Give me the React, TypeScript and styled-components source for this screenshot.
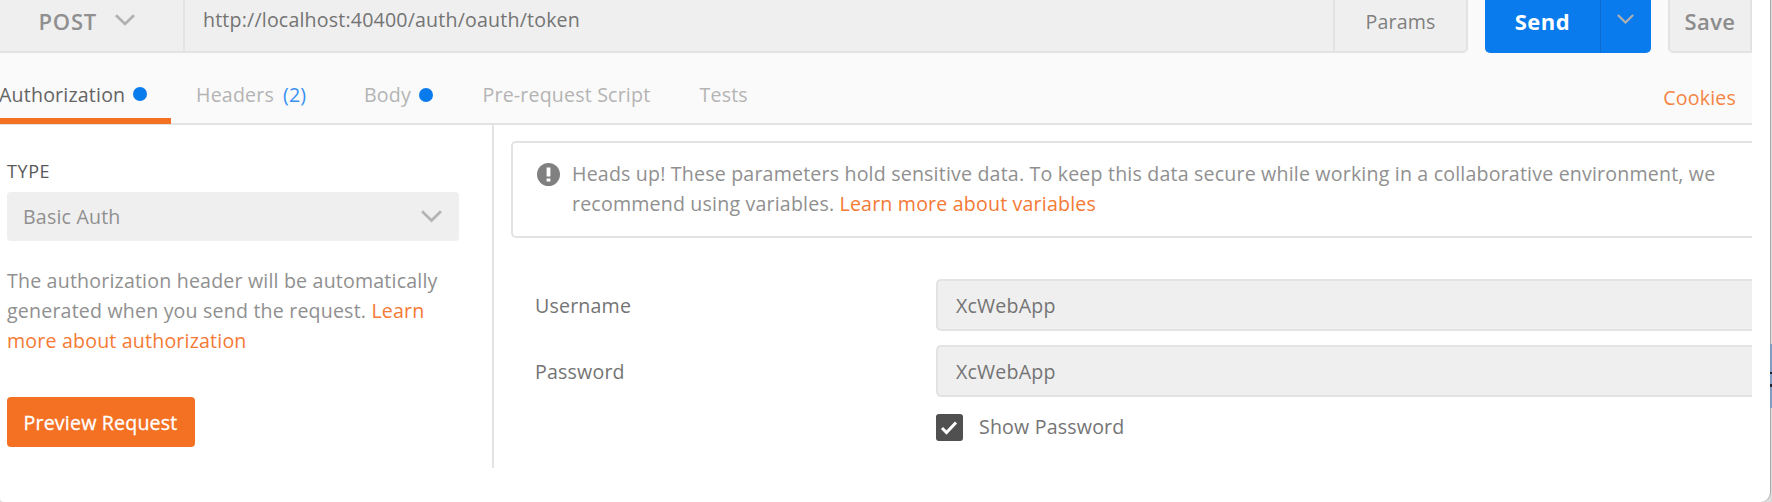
import React from "react";
import styled, { createGlobalStyle, css } from "styled-components";

const GlobalStyle = createGlobalStyle`
  * { box-sizing: border-box; }
  body {
    margin: 0;
    overflow: hidden;
    background: #dcdcdc;
    font-family: "Open Sans", "Noto Sans", sans-serif;
    font-size: 19.6px;
    letter-spacing: 0.18px;
    color: #747474;
  }
  button { font: inherit; letter-spacing: inherit; border: 0; padding: 0; }
`;

const Desktop = styled.div`
  position: relative;
  width: 1772px;
  height: 502px;
  overflow: hidden;
`;

const Window = styled.main`
  width: 1771px;
  height: 502px;
  background: #fff;
  border-right: 1px solid #a9a9a9;
  border-radius: 0 0 10px 4px;
`;

const Content = styled.div`
  width: 1752px;
  overflow: hidden;
`;

const BackgroundStrip = styled.div`
  position: absolute;
  right: 0;
  top: 344px;
  width: 2px;
  height: 64px;
  background: linear-gradient(#7f9cc6 0 28px, #23232f 28px 30px, #7f9cc6 30px 40px, #23232f 40px 43px, #7f9cc6 43px);
`;

const RequestBar = styled.header`
  display: flex;
  height: 64px;
  margin-top: -11px;
  background: #fafafa;
  white-space: nowrap;
`;

const barCell = css`
  display: flex;
  align-items: center;
  background: #efefef;
  border: 2px solid #e3e3e3;
`;

const MethodSelect = styled.div`
  ${barCell}
  width: 185px;
  padding-left: 38.5px;
  gap: 18px;
  border-left: 0;
  font-size: 22px;
  font-weight: 600;
  letter-spacing: 0.8px;
  color: #909090;

  svg { margin-bottom: 3px; }
`;

const UrlField = styled.div`
  ${barCell}
  width: 1148px;
  padding: 0 0 4px 18px;
  border-left: 0;
  border-right: 0;
`;

const ParamsButton = styled.button`
  ${barCell}
  width: 135px;
  justify-content: center;
  border-radius: 0 0 5px 0;
  color: #808080;
`;

const SendGroup = styled.div`
  display: flex;
  width: 166px;
  margin-left: 17px;
  border-radius: 5px;
  background: #097bed;
  color: #fff;
`;

const SendButton = styled.button`
  width: 116px;
  background: none;
  border-right: 1px solid #0a6bd0;
  color: inherit;
  font-size: 22px;
  font-weight: 700;
  letter-spacing: 0.5px;
`;

const SendMenu = styled.button`
  display: flex;
  flex: 1;
  align-items: center;
  justify-content: center;
  padding: 0 2px 3px 0;
  background: none;
`;

const SaveButton = styled.button`
  ${barCell}
  width: 84px;
  margin-left: 17px;
  justify-content: center;
  border-radius: 0 0 0 5px;
  font-size: 22px;
  font-weight: 600;
  letter-spacing: 0.4px;
  color: #8c8c8c;
`;

const TabBar = styled.nav`
  display: flex;
  height: 72px;
  background: #fafafa;
  border-bottom: 2px solid #e3e3e3;
  white-space: nowrap;
`;

const Tab = styled.div<{ $width: number; $active?: boolean }>`
  display: flex;
  flex: none;
  align-items: center;
  width: ${(p) => p.$width}px;
  height: 71px;
  margin-right: ${(p) => (p.$active ? 25 : 0)}px;
  padding-top: ${(p) => (p.$active ? 17 : 12)}px;
  border-bottom: ${(p) => (p.$active ? "6px solid #f47023" : "0")};
  color: ${(p) => (p.$active ? "#646464" : "#b4b4b4")};
  text-indent: ${(p) => (p.$active ? -1 : 0)}px;
`;

const Dot = styled.span`
  width: 14px;
  height: 14px;
  margin-left: 8px;
  border-radius: 50%;
  background: #097bed;
`;

const Count = styled.span`
  margin-left: 9px;
  color: #3792f2;
`;

const CookiesLink = styled.a`
  margin: 31px 16px 0 auto;
  color: #f58443;
`;

const Panel = styled.section`
  display: flex;
  height: 343px;
`;

const Sidebar = styled.aside`
  width: 494px;
  padding: 33px 0 0 7px;
  border-right: 2px solid #e3e3e3;
`;

const TypeLabel = styled.div`
  height: 34px;
  line-height: 27px;
  font-size: 18px;
  letter-spacing: 0.6px;
  color: #585858;
`;

const TypeSelect = styled.div`
  display: flex;
  align-items: center;
  justify-content: space-between;
  width: 452px;
  height: 49px;
  padding: 0 17px 0 16px;
  border-radius: 4px;
  background: #efefef;
  color: #909090;
`;

const Help = styled.p`
  margin: 25px 0 0;
  line-height: 30px;
  color: #909090;
  white-space: nowrap;
`;

const Link = styled.a`
  color: #f57a35;
`;

const PreviewButton = styled.button`
  width: 188px;
  height: 50px;
  margin-top: 41px;
  padding: 1px 1px 0 0;
  border-radius: 4px;
  background: #f47023;
  color: #fff;
  -webkit-text-stroke: 0.3px #fff;
`;

const Main = styled.div`
  flex: 1;
  padding: 16px 0 0 17px;
  white-space: nowrap;
`;

const Notice = styled.div`
  display: flex;
  height: 97px;
  padding: 16px 0 0 24px;
  border: 2px solid #e3e3e3;
  border-right: 0;
  border-radius: 5px 0 0 5px;
  color: #909090;
  line-height: 30px;
`;

const NoticeIcon = styled.svg`
  flex: none;
  width: 23px;
  height: 23px;
  margin: 4px 12px 0 0;
`;

const Field = styled.div<{ $top: number }>`
  display: flex;
  align-items: center;
  height: 52px;
  margin-top: ${(p) => p.$top}px;
  padding-left: 24px;
`;

const FieldLabel = styled.label`
  width: 401px;
`;

const FieldValue = styled.div`
  flex: 1;
  height: 52px;
  padding-left: 18px;
  border: 2px solid #e3e3e3;
  border-right: 0;
  border-radius: 5px 0 0 5px;
  background: #efefef;
  line-height: 49px;
`;

const CheckRow = styled.label`
  display: flex;
  align-items: center;
  gap: 16px;
  height: 27px;
  margin: 17px 0 0 425px;
`;

const CheckText = styled.span`
  padding-bottom: 2px;
`;

const CheckBox = styled.svg`
  width: 27px;
  height: 27px;
`;

function Chevron({ width, color }: { width: number; color: string }) {
  return (
    <svg width={width} height={width * 0.6} viewBox="0 0 20 12" fill="none" stroke={color} strokeWidth="2.6">
      <path d="M1 1.2 10 10 19 1.2" />
    </svg>
  );
}

export default function App() {
  return (
    <Desktop>
      <GlobalStyle />
      <Window>
        <Content>
          <RequestBar>
            <MethodSelect>
              POST
              <Chevron width={20} color="#b0b0b0" />
            </MethodSelect>
            <UrlField>http://localhost:40400/auth/oauth/token</UrlField>
            <ParamsButton>Params</ParamsButton>
            <SendGroup>
              <SendButton>Send</SendButton>
              <SendMenu>
                <Chevron width={17} color="#b0b0b0" />
              </SendMenu>
            </SendGroup>
            <SaveButton>Save</SaveButton>
          </RequestBar>
          <TabBar>
            <Tab $width={171} $active>
              Authorization
              <Dot />
            </Tab>
            <Tab $width={168}>
              Headers <Count>(2)</Count>
            </Tab>
            <Tab $width={118.5}>
              Body
              <Dot />
            </Tab>
            <Tab $width={217}>Pre-request Script</Tab>
            <Tab $width={60}>Tests</Tab>
            <CookiesLink>Cookies</CookiesLink>
          </TabBar>
          <Panel>
            <Sidebar>
              <TypeLabel>TYPE</TypeLabel>
              <TypeSelect>
                Basic Auth
                <Chevron width={21} color="#b4b4b4" />
              </TypeSelect>
              <Help>
                The authorization header will be automatically
                <br />
                generated when you send the request. <Link>Learn</Link>
                <br />
                <Link>more about authorization</Link>
              </Help>
              <PreviewButton>Preview Request</PreviewButton>
            </Sidebar>
            <Main>
              <Notice>
                <NoticeIcon viewBox="0 0 23 23">
                  <circle cx="11.5" cy="11.5" r="11.5" fill="#808080" />
                  <path d="M9.6 4.5h3.8v9H9.6zM9.6 15.5h3.8v3H9.6z" fill="#fff" />
                </NoticeIcon>
                <div>
                  Heads up! These parameters hold sensitive data. To keep this data secure while working in a collaborative environment, we
                  <br />
                  recommend using variables. <Link>Learn more about variables</Link>
                </div>
              </Notice>
              <Field $top={41}>
                <FieldLabel>Username</FieldLabel>
                <FieldValue>XcWebApp</FieldValue>
              </Field>
              <Field $top={14}>
                <FieldLabel>Password</FieldLabel>
                <FieldValue>XcWebApp</FieldValue>
              </Field>
              <CheckRow>
                <CheckBox viewBox="0 0 27 27">
                  <rect width="27" height="27" rx="3" fill="#505050" />
                  <path d="M6 14l4.5 4.5L20 8.5" fill="none" stroke="#fff" strokeWidth="3" />
                </CheckBox>
                <CheckText>Show Password</CheckText>
              </CheckRow>
            </Main>
          </Panel>
        </Content>
      </Window>
      <BackgroundStrip />
    </Desktop>
  );
}
